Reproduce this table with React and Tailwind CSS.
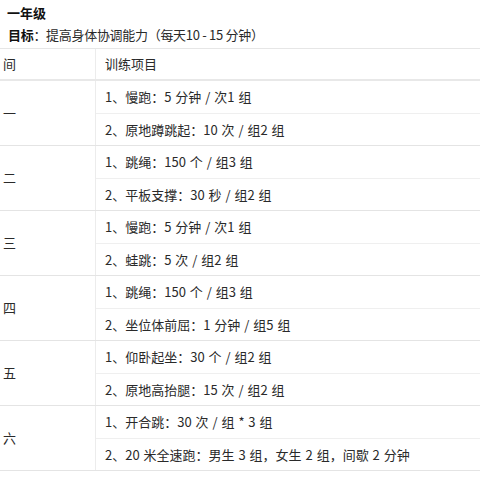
import React from 'react';

const plan = [
  { day: '一', items: ['1、慢跑：5 分钟 / 次1 组', '2、原地蹲跳起：10 次 / 组2 组'] },
  { day: '二', items: ['1、跳绳：150 个 / 组3 组', '2、平板支撑：30 秒 / 组2 组'] },
  { day: '三', items: ['1、慢跑：5 分钟 / 次1 组', '2、蛙跳：5 次 / 组2 组'] },
  { day: '四', items: ['1、跳绳：150 个 / 组3 组', '2、坐位体前屈：1 分钟 / 组5 组'] },
  { day: '五', items: ['1、仰卧起坐：30 个 / 组2 组', '2、原地高抬腿：15 次 / 组2 组'] },
  { day: '六', items: ['1、开合跳：30 次 / 组 * 3 组', '2、20 米全速跑：男生 3 组，女生 2 组，间歇 2 分钟'] },
];

const App = () => {
  return (
    <div
      className="w-[480px] h-[480px] overflow-hidden bg-white text-[#2a2a2a] text-[13px]"
      style={{ fontFamily: '"Noto Sans CJK SC", "Noto Sans", sans-serif' }}
    >
      <div className="pl-[7px] pt-[1px] leading-[23px] font-bold text-[#111]">一年级</div>
      <div className="pl-[8px] leading-[22px] tracking-[-0.3px]">
        <span className="font-semibold text-[#111]">目标</span>：提高身体协调能力（每天10 - 15 分钟）
      </div>

      {/* table */}
      <div className="mt-[2px] border-t border-[#e6e6e6] [word-spacing:1px]">
        <div className="grid grid-cols-[96px_1fr] h-[32px] border-b-2 border-[#e8e8e8]">
          <div className="flex items-center pl-[3px] border-r border-[#ececec]">间</div>
          <div className="flex items-center pl-[9px]">训练项目</div>
        </div>

        {plan.map((group) => (
          <div key={group.day} className="grid grid-cols-[96px_1fr] h-[65px] border-b border-[#e4e4e4]">
            <div className="flex items-center pl-[3px] border-r border-[#ececec]">{group.day}</div>
            <div className="flex flex-col">
              <div className="flex-1 flex items-center pl-[9px] border-b border-[#efefef] whitespace-nowrap">
                {group.items[0]}
              </div>
              <div className="flex-1 flex items-center pl-[9px] whitespace-nowrap">{group.items[1]}</div>
            </div>
          </div>
        ))}
      </div>
    </div>
  );
};

export default App;
